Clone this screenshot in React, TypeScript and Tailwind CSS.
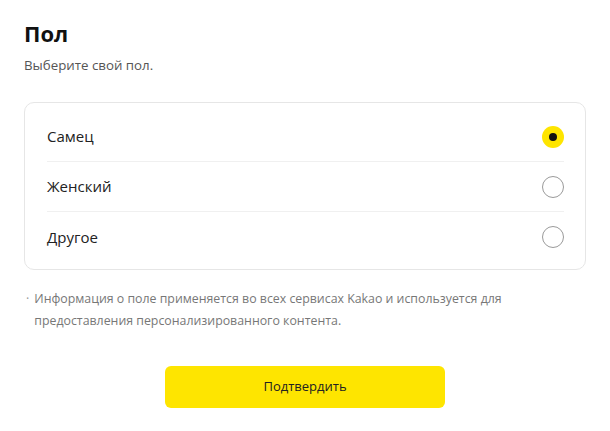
import React from "react";

const options = [
  { label: "Самец", checked: true },
  { label: "Женский", checked: false },
  { label: "Другое", checked: false },
];

export default function App() {
  return (
    <div
      className="w-[610px] h-[431px] bg-white px-6 pt-[18px] text-[#222]"
      style={{ fontFamily: '"Open Sans", "Noto Sans", sans-serif' }}
    >
      <h1 className="text-[22px] font-bold leading-[30px] text-[#111]">Пол</h1>
      <p className="mt-[8px] text-[13.3px] leading-[18px] text-[#555]">Выберите свой пол.</p>

      <div className="mt-[28px] rounded-[10px] border border-[#e6e6e6] pl-[22px] pr-[21px] pt-[9px] pb-[7px]">
        {options.map((o, i) => (
          <div
            key={o.label}
            className={`flex h-[50px] items-center justify-between ${i < options.length - 1 ? "border-b border-[#f0f0f0]" : ""}`}
          >
            <span className="text-[15px] text-[#222]">{o.label}</span>
            {o.checked ? (
              <span className="flex h-[22px] w-[22px] items-center justify-center rounded-full bg-[#fee500]">
                <span className="h-[8px] w-[8px] rounded-full bg-[#111]" />
              </span>
            ) : (
              <span className="h-[22px] w-[22px] rounded-full border-[1.5px] border-[#9a9a9a]" />
            )}
          </div>
        ))}
      </div>

      <div className="mt-[18px] flex pl-[2px] text-[12.35px] leading-[22px] text-[#777]">
        <span className="mr-[5px] text-[#999]">·</span>
        <p>
          Информация о поле применяется во всех сервисах Kakao и используется для
          <br />
          предоставления персонализированного контента.
        </p>
      </div>

      <div className="mt-[34px] flex justify-center">
        <button className="flex h-[42px] w-[280px] items-center justify-center rounded-[6px] bg-[#fee500] text-[13px] text-[#222]">
          Подтвердить
        </button>
      </div>
    </div>
  );
}
